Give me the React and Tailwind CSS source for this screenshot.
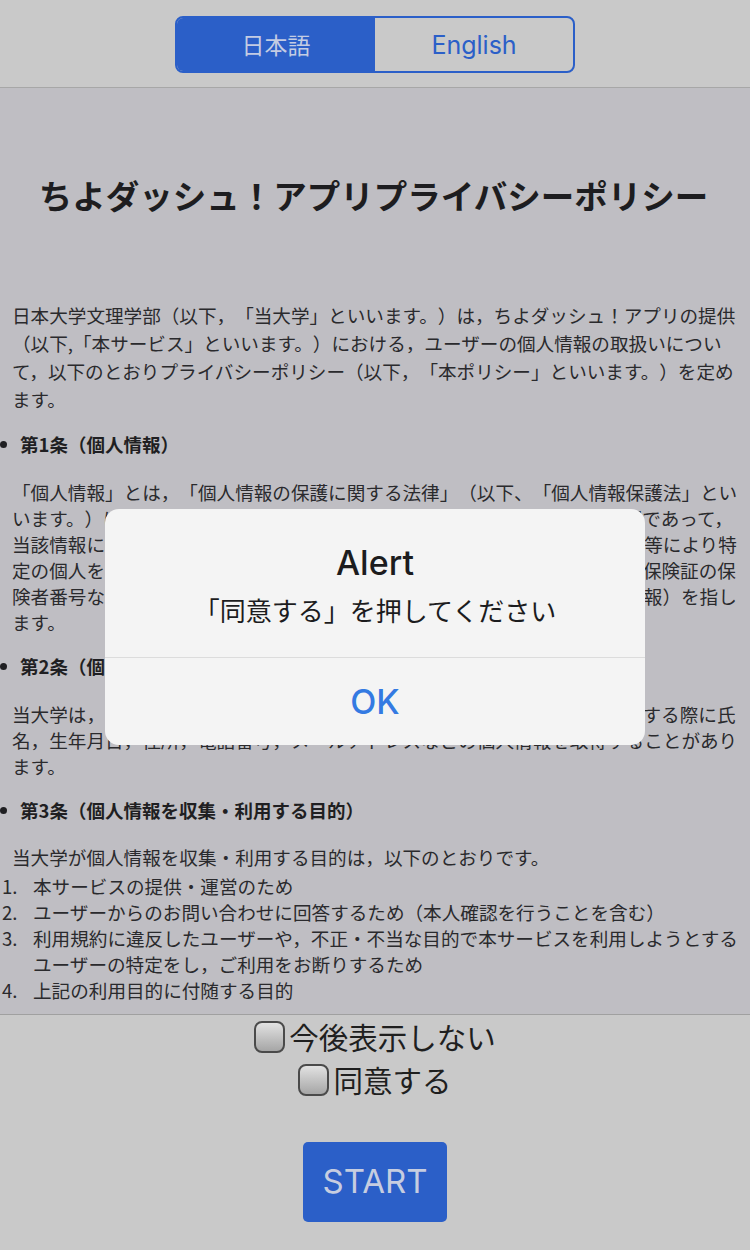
import React from "react";

const intro = [
  "日本大学文理学部（以下，「当大学」といいます。）は，ちよダッシュ！アプリの提供",
  "（以下,「本サービス」といいます。）における，ユーザーの個人情報の取扱いについ",
  "て，以下のとおりプライバシーポリシー（以下，「本ポリシー」といいます。）を定め",
  "ます。",
];

const sections = [
  {
    title: "第1条（個人情報）",
    lines: [
      "「個人情報」とは，「個人情報の保護に関する法律」（以下、「個人情報保護法」とい",
      "います。）にいう「個人情報」を指すものとし，生存する個人に関する情報であって，",
      "当該情報に含まれる氏名，生年月日，住所，電話番号，連絡先その他の記述等により特",
      "定の個人を識別できる情報及び容貌，指紋，声紋にかかるデータ，及び健康保険証の保",
      "険者番号などの当該情報単体から特定の個人を識別できる情報（個人識別情報）を指し",
      "ます。",
    ],
  },
  {
    title: "第2条（個人情報の収集方法）",
    lines: [
      "当大学は，本サービスの提供にあたり，ユーザーが本サービスの利用登録をする際に氏",
      "名，生年月日，住所，電話番号，メールアドレスなどの個人情報を取得することがあり",
      "ます。",
    ],
  },
];

const purposes = [
  ["本サービスの提供・運営のため"],
  ["ユーザーからのお問い合わせに回答するため（本人確認を行うことを含む）"],
  [
    "利用規約に違反したユーザーや，不正・不当な目的で本サービスを利用しようとする",
    "ユーザーの特定をし，ご利用をお断りするため",
  ],
  ["上記の利用目的に付随する目的"],
];

const Lines = ({ lines }) =>
  lines.map((l, i) => (
    <React.Fragment key={i}>
      {l}
      {i < lines.length - 1 && <br />}
    </React.Fragment>
  ));

const Heading = ({ children, className = "" }) => (
  <div className={`flex items-center leading-[26px] text-[18.5px] font-bold text-[#1f1f22] -ml-[12px] ${className}`}>
    <span className="w-[7px] h-[7px] rounded-full bg-[#1f1f22] mr-[13px]" />
    {children}
  </div>
);

const Checkbox = ({ label }) => (
  <label className="h-[43px] flex items-center justify-center gap-[4px]">
    <span className="w-[31px] h-[32px] rounded-[8px] border-2 border-[#4a4a4a] bg-linear-to-b from-[#e2e2e2] to-[#a6a6a6]" />
    <span className="text-[29.5px] leading-[43px] text-[#1f1f1f]">{label}</span>
  </label>
);

export default function App() {
  return (
    <div className="relative w-[750px] h-[1250px] flex flex-col overflow-hidden bg-[#c9c9c9] font-['Noto_Sans_CJK_JP',sans-serif] [text-spacing-trim:space-all]">
      {/* language switch */}
      <header className="h-[88px] shrink-0 border-b border-[#a7a7a7] flex justify-center pt-[16px]">
        <div className="flex w-[400px] h-[57px] rounded-[8px] border-2 border-[#2b5fc8] overflow-hidden">
          <div className="flex-1 bg-[#2b5fc8] text-[#c3cce3] text-[23px] flex items-center justify-center">
            日本語
          </div>
          <div className="flex-1 text-[#2b5fc8] text-[25px] font-['Inter',sans-serif] flex items-center justify-center pt-[2px]">
            English
          </div>
        </div>
      </header>

      {/* policy text */}
      <main className="flex-1 overflow-hidden bg-[#bfbec3] pl-[12px] pr-[9px] text-[18.6px] text-[#2a2a2d]">
        <h1 className="mt-[87px] mb-[86px] text-center text-[33.5px] leading-[40px] font-bold text-[#1d1d20] -ml-[6px]">
          ちよダッシュ！アプリプライバシーポリシー
        </h1>
        <p className="leading-[28px]">
          <Lines lines={intro} />
        </p>

        {sections.map((s) => (
          <React.Fragment key={s.title}>
            <Heading className="mt-[18px]">{s.title}</Heading>
            <p className="mt-[22px] leading-[26px]">
              <Lines lines={s.lines} />
            </p>
          </React.Fragment>
        ))}

        <Heading className="mt-[18px]">第3条（個人情報を収集・利用する目的）</Heading>
        <p className="mt-[21px] leading-[26px]">当大学が個人情報を収集・利用する目的は，以下のとおりです。</p>
        <ol className="mt-[3px] leading-[26px] -ml-[10px]">
          {purposes.map((p, i) => (
            <li key={i} className="flex">
              <span className="w-[31px] shrink-0">{i + 1}.</span>
              <span>
                <Lines lines={p} />
              </span>
            </li>
          ))}
        </ol>
        <Heading className="mt-[18px]">第4条（利用目的の変更）</Heading>
        <p className="mt-[22px] leading-[26px]">
          当大学は，利用目的が変更前と関連性を有すると合理的に認められる場合に限り，個人情報の利用目的を変更するものとします。
        </p>
      </main>

      {/* agreement */}
      <footer className="h-[236px] shrink-0 border-t border-[#a0a0a0] flex flex-col items-center">
        <Checkbox label="今後表示しない" />
        <Checkbox label="同意する" />
        <button className="mt-[41px] w-[144px] h-[80px] rounded-[5px] bg-[#2b5fc8] text-[#c6cde0] text-[33px] font-['Inter',sans-serif]">
          START
        </button>
      </footer>

      {/* alert */}
      <div className="absolute inset-0 flex items-center justify-center pt-[4px]">
        <div className="w-[540px] rounded-[14px] bg-[#f4f4f4] text-center">
          <div className="pt-[34px] pb-[31px]">
            <div className="text-[34px] leading-[40px] font-medium text-[#1c1c1e] font-['Inter',sans-serif]">Alert</div>
            <div className="mt-[11px] text-[26px] leading-[32px] text-[#1c1c1e]">「同意する」を押してください</div>
          </div>
          <div className="h-[88px] border-t border-[#dcdcdc] flex items-center justify-center text-[34px] font-medium text-[#347ae2] font-['Inter',sans-serif]">
            OK
          </div>
        </div>
      </div>
    </div>
  );
}
